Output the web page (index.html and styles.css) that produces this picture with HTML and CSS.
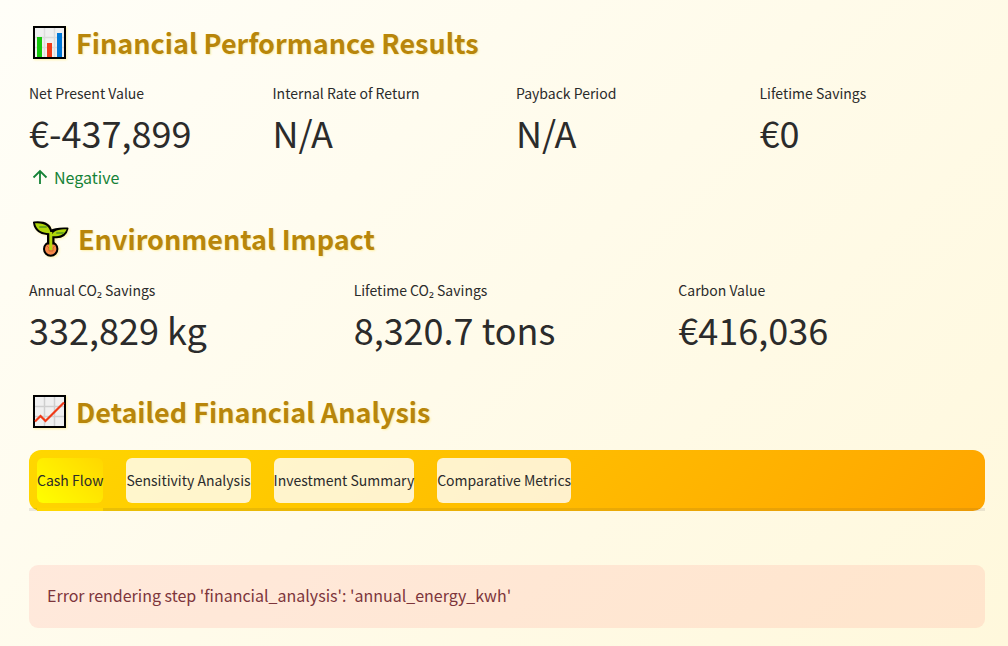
FILE: index.html
```html
<!DOCTYPE html>
<html lang="en">
<head>
<meta charset="utf-8">
<meta name="viewport" content="width=device-width, initial-scale=1">
<title>Financial Performance Results</title>
<link rel="stylesheet" href="styles.css">
</head>
<body>
<main class="page">
  <section class="section section-financial">
    <h2 class="heading">
      <svg class="heading-icon" viewBox="0 0 36 36" aria-hidden="true">
        <rect x="1" y="1" width="33" height="33" fill="#000"/>
        <rect x="3" y="3" width="29" height="29" fill="#f0f0f0"/>
        <path d="M12.5 3v29M22.5 3v29M3 12.5h29M3 22.5h29" stroke="#dcdcdc" stroke-width="1.5"/>
        <path d="M5 12h5v20H5z" fill="#16c60c"/>
        <path d="M15 18h5v14h-5z" fill="#f03a17"/>
        <path d="M25 8h5v24h-5z" fill="#0078d7"/>
      </svg>
      <span>Financial Performance Results</span>
    </h2>
    <dl class="metrics metrics-four">
      <div class="metric"><dt class="metric-label">Net Present Value</dt><dd class="metric-value">€-437,899</dd>
        <dd class="metric-delta"><svg class="delta-icon" viewBox="0 0 18 18" aria-hidden="true"><path d="M9 16V3M2.500 9.500L9 3l6.500 6.500" fill="none" stroke="currentColor" stroke-width="1.8"/></svg>Negative</dd></div>
      <div class="metric"><dt class="metric-label">Internal Rate of Return</dt><dd class="metric-value">N/A</dd></div>
      <div class="metric"><dt class="metric-label">Payback Period</dt><dd class="metric-value">N/A</dd></div>
      <div class="metric"><dt class="metric-label">Lifetime Savings</dt><dd class="metric-value">€0</dd></div>
    </dl>
  </section>

  <section class="section section-environment">
    <h2 class="heading">
      <svg class="heading-icon heading-icon-wide" viewBox="0 0 38 38" aria-hidden="true">
        <circle cx="18.700" cy="29" r="6.700" fill="#f7894a" stroke="#000" stroke-width="2"/>
        <path d="M2 2.500C13 1.500 18 5 19 11C23 8 28 8.500 35.500 8.500C34 15 29 18 21.500 17V23.500H16V14C9 14.500 3 10 2 2.500Z" fill="#000" stroke="#000" stroke-width="2" stroke-linejoin="round"/>
        <path d="M3 3.300C12 2.500 18 6 18.500 13.300C10 13.600 4.500 10 3 3.300ZM19.500 16.300C20.500 10.500 27 9.300 34.700 9.300C32.500 14.800 27 16.800 19.500 16.300Z" fill="#b0d60b"/>
        <path d="M8 7h6M25 13h6" fill="none" stroke="#6ba51b" stroke-width="2" stroke-linecap="round"/>
        <path d="M14.500 25.500L17 28v3h4v-3l2-2.500" fill="none" stroke="#cf6b2c" stroke-width="1"/>
        <path d="M18.800 12v18" stroke="#b5d80b" stroke-width="3"/>
      </svg>
      <span>Environmental Impact</span>
    </h2>
    <dl class="metrics metrics-three">
      <div class="metric"><dt class="metric-label">Annual CO<span class="subscript">₂</span> Savings</dt><dd class="metric-value">332,829 kg</dd></div>
      <div class="metric"><dt class="metric-label">Lifetime CO<span class="subscript">₂</span> Savings</dt><dd class="metric-value">8,320.7 tons</dd></div>
      <div class="metric"><dt class="metric-label">Carbon Value</dt><dd class="metric-value">€416,036</dd></div>
    </dl>
  </section>

  <section class="section">
    <h2 class="heading">
      <svg class="heading-icon" viewBox="0 0 36 36" aria-hidden="true">
        <rect x="1" y="1" width="33" height="33" fill="#000"/>
        <rect x="3" y="3" width="29" height="29" fill="#f0f0f0"/>
        <path d="M12.500 3v29M22.500 3v29M3 12.500h29M3 22.500h29" stroke="#cfcfcf" stroke-width="1.500"/>
        <path d="M3 27.500L8.500 22L13.500 27L32 8.500" fill="none" stroke="#f03a17" stroke-width="2.200"/>
      </svg>
      <span>Detailed Financial Analysis</span>
    </h2>
    <div class="tabs" role="tablist" aria-label="Detailed Financial Analysis">
      <button class="tab tab-active" type="button" role="tab" aria-selected="true">Cash Flow</button>
      <button class="tab" type="button" role="tab" aria-selected="false">Sensitivity Analysis</button>
      <button class="tab" type="button" role="tab" aria-selected="false">Investment Summary</button>
      <button class="tab" type="button" role="tab" aria-selected="false">Comparative Metrics</button>
    </div>
  </section>

  <div class="alert" role="alert">Error rendering step 'financial_analysis': 'annual_energy_kwh'</div>
</main>
</body>
</html>
```
FILE: styles.css
```css
* { box-sizing: border-box; }

body {
  margin: 0;
  min-height: 100vh;
  background: linear-gradient(135deg, #fffef8 0%, #fffbea 50%, #fff8dc 100%);
  color: #2b2b2b;
  font-family: "Source Sans Pro", "Noto Sans CJK SC", sans-serif;
  font-size: 16px;
}

.page { padding: 24px 23px 18px 29px; }

.heading {
  display: flex;
  align-items: center;
  gap: 8px;
  margin: 0;
  padding-left: 3px;
  height: 38px;
  color: #b8860b;
  font-size: 27px;
  font-weight: 600;
  line-height: 38px;
  text-shadow: 1px 1px 2px rgba(255, 215, 0, 0.3);
}

.heading-icon {
  flex: none;
  width: 36px;
  height: 36px;
  filter: drop-shadow(1px 1px 1px rgba(255, 215, 0, 0.3));
}

.heading-icon-wide { width: 38px; height: 38px; }

.metrics {
  display: grid;
  gap: 18px;
  margin: 20px 0 0;
}

.metrics-four { grid-template-columns: repeat(4, 1fr); }

.metrics-three {
  grid-template-columns: repeat(3, 1fr);
  margin-top: 21px;
}

.metric-label {
  font-size: 14px;
  line-height: 22px;
}

.subscript {
  font-family: "Noto Sans", sans-serif;
  line-height: 1;
}

.metric-value {
  margin: 0;
  font-size: 36px;
  line-height: 56px;
}

.metric-delta {
  display: flex;
  align-items: center;
  gap: 5px;
  margin: 2px 0 0;
  padding-left: 2px;
  color: #158237;
  line-height: 30px;
}

.delta-icon { width: 18px; height: 18px; }

.section-financial { margin-bottom: 28px; }
.section-environment { margin-bottom: 36px; }

.tabs {
  position: relative;
  display: flex;
  gap: 23px;
  margin-top: 19px;
  padding: 8px;
  border-radius: 12px;
  background: linear-gradient(135deg, #ffd700, #ffa500);
}

.tabs::after {
  content: "";
  position: absolute;
  inset: auto 0 0;
  height: 3px;
  background: rgba(49, 51, 63, 0.1);
}

.tab {
  position: relative;
  height: 45px;
  padding: 0 0 2px;
  border: 0;
  border-radius: 6px;
  background: rgba(255, 255, 255, 0.8);
  color: #2b2b2b;
  font: inherit;
  font-size: 14px;
  white-space: nowrap;
  cursor: pointer;
}

.tab-active { background: linear-gradient(45deg, #ffff00, #ffd700); }

.tab-active::after {
  content: "";
  position: absolute;
  z-index: 1;
  inset: auto 0 -8px;
  height: 3px;
  background: #ffd700;
}

.alert {
  margin-top: 54px;
  padding: 17px 18px 19px;
  border-radius: 9px;
  background: rgba(255, 43, 43, 0.09);
  color: #7d353b;
  line-height: 27px;
}
```
